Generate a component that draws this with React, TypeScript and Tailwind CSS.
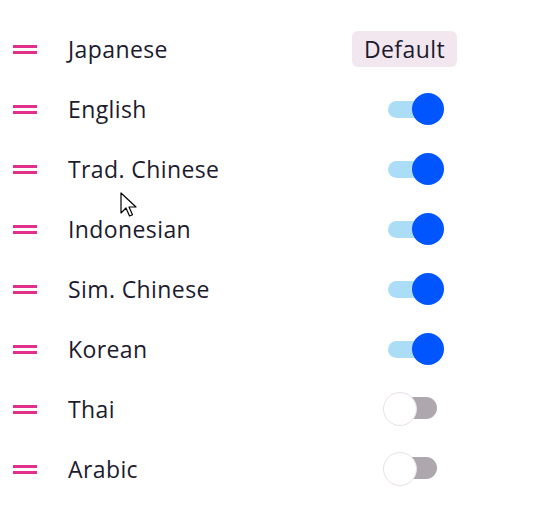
import { useState } from 'react';

type Lang = { name: string; on: boolean | null };

const initial: Lang[] = [
    { name: 'Japanese', on: null },
    { name: 'English', on: true },
    { name: 'Trad. Chinese', on: true },
    { name: 'Indonesian', on: true },
    { name: 'Sim. Chinese', on: true },
    { name: 'Korean', on: true },
    { name: 'Thai', on: false },
    { name: 'Arabic', on: false },
];

function Handle() {
    return (
        <div className="flex flex-col gap-[3px] w-[24px]">
            <span className="block h-[3px] bg-[#e0308b]" />
            <span className="block h-[3px] bg-[#e0308b]" />
        </div>
    );
}

function Toggle({ on, onClick }: { on: boolean; onClick: () => void }) {
    if (on) {
        return (
            <button onClick={onClick} className="relative ml-[36px] w-[56px] h-[32px]">
                <span className="absolute left-0 top-[8px] w-[48px] h-[17px] rounded-full bg-[#abdef6]" />
                <span className="absolute right-0 top-0 w-[32px] h-[32px] rounded-full bg-[#0055ff]" />
            </button>
        );
    }
    return (
        <button onClick={onClick} className="relative ml-[31px] w-[54px] h-[34px]">
            <span className="absolute right-0 top-[5px] w-[40px] h-[22px] rounded-full bg-[#aea7ae]" />
            <span className="absolute left-0 top-0 w-[34px] h-[34px] rounded-full bg-white border border-[#e9dfe7]" />
        </button>
    );
}

export default function App() {
    const [langs, setLangs] = useState(initial);

    const flip = (i: number) =>
        setLangs((prev) => prev.map((l, j) => (j === i ? { ...l, on: !l.on } : l)));

    return (
        <div className="relative w-[552px] h-[510px] bg-white pt-[19px] text-[#1c1b2e]" style={{ fontFamily: '"Open Sans", "Noto Sans", sans-serif' }}>
            {langs.map((l, i) => (
                <div key={l.name} className="flex items-center h-[60px] pl-[13px]">
                    <Handle />
                    <span className="ml-[31px] w-[284px] text-[23px] tracking-[0.4px] leading-none">{l.name}</span>
                    <div className="w-[105px] flex items-center">
                        {l.on === null ? (
                            <span className="w-[105px] h-[36px] flex items-center justify-center rounded-md bg-[#f2e6ef] text-[23px] tracking-[0.4px] leading-none">
                                Default
                            </span>
                        ) : (
                            <Toggle on={l.on} onClick={() => flip(i)} />
                        )}
                    </div>
                </div>
            ))}

            {/* mouse pointer */}
            <svg className="absolute left-[120px] top-[192px]" width="20" height="28" viewBox="0 0 20 28">
                <path d="M1 1 L1 21 L6 16 L9.5 24 L12.5 22.7 L9 15 L16 15 Z" fill="white" stroke="black" strokeWidth="1.2" strokeLinejoin="round" />
            </svg>
        </div>
    );
}
